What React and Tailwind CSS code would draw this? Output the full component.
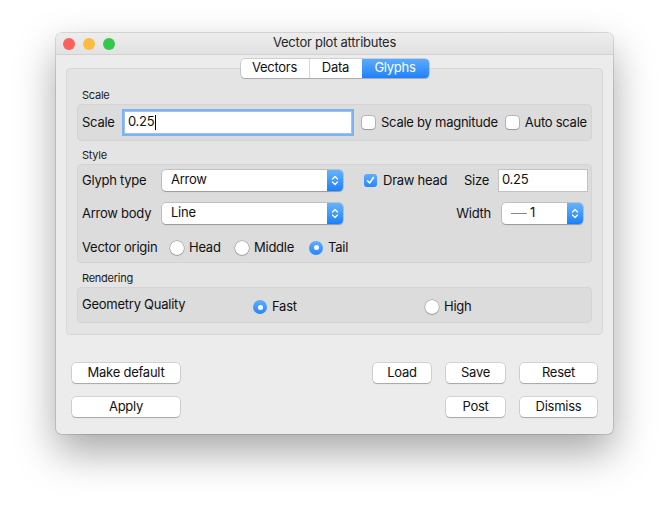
const font = { fontFamily: "Inter, 'Liberation Sans', sans-serif", letterSpacing: "-0.25px" };

const Chevrons = () => (
  <svg width="8" height="13" viewBox="0 0 8 13" fill="none" stroke="white" strokeWidth="1.3" strokeLinecap="round" strokeLinejoin="round">
    <path d="M1.5 5 L4 2.5 L6.5 5" />
    <path d="M1.5 8 L4 10.5 L6.5 8" />
  </svg>
);

const Select = ({ width, children }) => (
  <div
    className={`flex h-[21px] items-stretch rounded-[4px] bg-white shadow-[0_0_0_0.5px_rgba(0,0,0,0.25),0_1px_1px_rgba(0,0,0,0.2)] ${width}`}
  >
    <span className="flex flex-1 items-center pl-[9px] pb-[2px]">{children}</span>
    <span className="flex w-[16px] items-center justify-center rounded-r-[4px] bg-gradient-to-b from-[#66b2fd] to-[#1a7ff9]">
      <Chevrons />
    </span>
  </div>
);

const Checkbox = ({ checked, label }) => (
  <label className="flex items-center gap-[6px] whitespace-nowrap">
    {checked ? (
      <span className="flex h-[13px] w-[13px] items-center justify-center rounded-[3px] bg-gradient-to-b from-[#5eaefd] to-[#2486fb]">
        <svg width="9" height="9" viewBox="0 0 9 9" fill="none" stroke="white" strokeWidth="1.6" strokeLinecap="round" strokeLinejoin="round">
          <path d="M1.5 4.8 L3.6 7 L7.5 1.5" />
        </svg>
      </span>
    ) : (
      <span className="h-[13px] w-[13px] rounded-[3px] bg-white shadow-[0_0_0_0.5px_rgba(0,0,0,0.35),0_1px_1px_rgba(0,0,0,0.15)]" />
    )}
    <span>{label}</span>
  </label>
);

const Radio = ({ checked, label, width, className }) => (
  <label className={`flex items-center gap-[5px] whitespace-nowrap ${width || ""} ${className || ""}`}>
    {checked ? (
      <span className="flex h-[14px] w-[14px] items-center justify-center rounded-full bg-gradient-to-b from-[#5eaefd] to-[#2486fb]">
        <span className="h-[5px] w-[5px] rounded-full bg-white" />
      </span>
    ) : (
      <span className="h-[14px] w-[14px] rounded-full bg-white shadow-[0_0_0_0.5px_rgba(0,0,0,0.35),0_1px_1px_rgba(0,0,0,0.15)]" />
    )}
    <span>{label}</span>
  </label>
);

const Button = ({ width, children }) => (
  <button
    type="button"
    className={`flex h-[20px] items-center justify-center rounded-[4px] bg-white pb-[1px] text-[13px] text-[#111] shadow-[0_0_0_0.5px_rgba(0,0,0,0.22),0_1px_1px_rgba(0,0,0,0.2)] ${width}`}
  >
    {children}
  </button>
);

const SectionLabel = ({ children }) => (
  <div className="flex h-[14px] items-center pl-[5px] text-[11px] text-[#1a1a1a]">{children}</div>
);

const Group = ({ className, children }) => (
  <div className={`rounded-[4px] border border-[#d4d4d4] bg-[#dcdcdc] ${className}`}>{children}</div>
);

export default function App() {
  return (
    <div className="h-[515px] w-[669px] bg-white pl-[56px] pt-[33px]" style={font}>
      <div className="flex h-[401px] w-[557px] flex-col overflow-hidden rounded-[5px] bg-[#ececec] text-[13px] text-[#111] shadow-[0_0_0_0.5px_rgba(0,0,0,0.25),0_18px_40px_rgba(0,0,0,0.35)]">
        {/* title bar */}
        <div className="relative flex h-[22px] items-center border-b border-[#d2d2d2] bg-gradient-to-b from-[#ededed] to-[#e2e2e2]">
          <div className="flex gap-[8px] pl-[7px]">
            <span className="h-[12px] w-[12px] rounded-full bg-[#fc605c]" />
            <span className="h-[12px] w-[12px] rounded-full bg-[#fdbc40]" />
            <span className="h-[12px] w-[12px] rounded-full bg-[#34c84a]" />
          </div>
          <div className="absolute inset-0 flex items-center justify-center pb-[1px] text-[13px] text-[#262626]">
            Vector plot attributes
          </div>
        </div>

        {/* tabs */}
        <div className="relative z-10 mt-[4px] flex justify-center">
          <div className="flex h-[19px] overflow-hidden rounded-[4px] bg-white shadow-[0_0_0_0.5px_rgba(0,0,0,0.25),0_1px_1px_rgba(0,0,0,0.15)]">
            <div className="flex w-[69px] items-center justify-center border-r border-[#d6d6d6] pb-[1px]">Vectors</div>
            <div className="flex w-[52px] items-center justify-center pb-[1px]">Data</div>
            <div className="flex w-[67px] items-center justify-center bg-gradient-to-b from-[#5aabfd] to-[#2080fa] pb-[1px] text-white">
              Glyphs
            </div>
          </div>
        </div>

        {/* tab panel */}
        <div className="mx-[10px] mt-[-10px] flex h-[267px] flex-col rounded-[4px] border border-[#d8d8d8] bg-[#e4e4e4] px-[10px] pt-[19px]">
          <SectionLabel>Scale</SectionLabel>
          <Group className="mt-[2px] flex h-[37px] items-center pl-[4px]">
            <span className="w-[43px]">Scale</span>
            <div className="flex h-[21px] w-[226px] items-center bg-white pl-[3px] pb-[1px] shadow-[0_0_0_1px_#9cc3f5,0_0_0_3px_#7fb2f3]">
              0.25<span className="ml-[1px] h-[15px] w-px bg-black" />
            </div>
            <div className="ml-[11px] flex items-center gap-[8px]">
              <Checkbox label="Scale by magnitude" />
              <Checkbox label="Auto scale" />
            </div>
          </Group>

          <div className="mt-[7px]">
            <SectionLabel>Style</SectionLabel>
          </div>
          <Group className="mt-[2px] flex h-[99px] flex-col pl-[4px] pr-[4px] pt-[5px]">
            <div className="flex h-[21px] items-center">
              <span className="w-[80px]">Glyph type</span>
              <Select width="w-[181px]">Arrow</Select>
              <div className="ml-[21px]">
                <Checkbox checked label="Draw head" />
              </div>
              <div className="ml-auto flex items-center gap-[10px]">
                <span>Size</span>
                <div className="flex h-[21px] w-[88px] items-center bg-white pl-[3px] pb-[1px] shadow-[0_0_0_1px_#c2c2c2]">
                  0.25
                </div>
              </div>
            </div>
            <div className="mt-[12px] flex h-[21px] items-center">
              <span className="w-[80px]">Arrow body</span>
              <Select width="w-[181px]">Line</Select>
              <div className="ml-auto mr-[4px] flex items-center gap-[11px]">
                <span>Width</span>
                <Select width="w-[81px]">
                  <span className="mr-[3px] mt-[1px] h-px w-[16px] bg-[#888]" />1
                </Select>
              </div>
            </div>
            <div className="mt-[13px] flex h-[21px] items-center">
              <span className="w-[88px]">Vector origin</span>
              <Radio width="w-[65px]" label="Head" />
              <Radio width="w-[74px]" label="Middle" />
              <Radio checked label="Tail" />
            </div>
          </Group>

          <div className="mt-[8px]">
            <SectionLabel>Rendering</SectionLabel>
          </div>
          <Group className="mt-[2px] flex h-[36px] items-center pl-[4px]">
            <span className="w-[171px] pb-[1px]">Geometry Quality</span>
            <Radio checked width="w-[172px]" className="mt-[4px]" label="Fast" />
            <Radio className="mt-[4px]" label="High" />
          </Group>
        </div>

        {/* buttons */}
        <div className="mt-[28px] flex items-center px-[16px]">
          <Button width="w-[108px]">Make default</Button>
          <div className="ml-auto flex gap-[15px]">
            <Button width="w-[58px]">Load</Button>
            <Button width="w-[59px]">Save</Button>
            <Button width="w-[77px]">Reset</Button>
          </div>
        </div>
        <div className="mt-[14px] flex items-center px-[16px]">
          <Button width="w-[108px]">Apply</Button>
          <div className="ml-auto flex gap-[15px]">
            <Button width="w-[59px]">Post</Button>
            <Button width="w-[77px]">Dismiss</Button>
          </div>
        </div>
      </div>
    </div>
  );
}
